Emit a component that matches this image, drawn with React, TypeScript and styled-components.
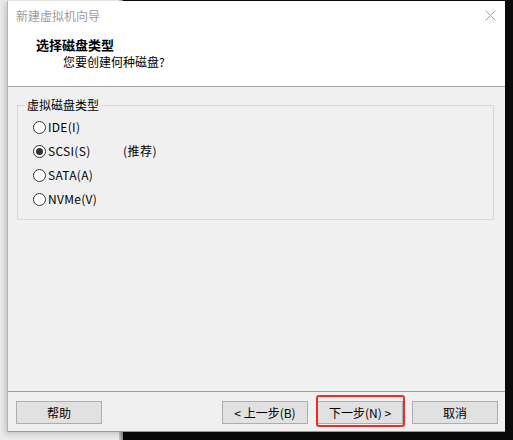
import { ReactNode } from "react";
import styled, { createGlobalStyle } from "styled-components";

const GlobalStyle = createGlobalStyle`
  html, body {
    margin: 0;
    padding: 0;
    background: #0a0a0a;
  }
  body {
    font-family: "Noto Sans CJK SC", "Noto Sans", sans-serif;
    font-size: 12px;
    color: #000;
  }
`;

const Desktop = styled.div`
  position: relative;
  width: 513px;
  height: 440px;
  overflow: hidden;
  display: grid;
  grid-template-columns: 119px 4px 1fr;
`;

const SidePanel = styled.div`
  background: #ebebeb;
`;

const PanelEdge = styled.div`
  background: linear-gradient(to right, #c8c8c8, #8a8a8a);
`;

const Backdrop = styled.div`
  background: #0a0a0a;
`;

const Window = styled.div`
  position: absolute;
  left: 7px;
  top: 1px;
  width: 498px;
  height: 431px;
  box-sizing: border-box;
  border-left: 1px solid #b4b4b4;
  border-bottom: 1px solid #9a9a9a;
  background: #f0f0f0;
  box-shadow: -2px 2px 6px rgba(0, 0, 0, 0.18);
  display: flex;
  flex-direction: column;
`;

const TitleBar = styled.div`
  height: 29px;
  display: flex;
  align-items: center;
  justify-content: space-between;
  padding: 0 9px 0 8px;
  background: #fff;
`;

const Caption = styled.span`
  color: #9b9b9b;
  line-height: 16px;
`;

const CloseButton = styled.button`
  width: 12px;
  height: 12px;
  padding: 0;
  border: 0;
  background: none;
  display: flex;
  align-items: center;
  justify-content: center;
`;

const Header = styled.div`
  height: 57px;
  box-sizing: border-box;
  padding-top: 7px;
  background: #fff;
  border-bottom: 1px solid #a0a0a0;
  display: flex;
  flex-direction: column;
  gap: 1px;
`;

const Title = styled.b`
  padding-left: 28px;
  font-size: 13px;
  line-height: 16px;
  font-weight: 700;
`;

const Subtitle = styled.span`
  padding-left: 55px;
  line-height: 16px;
`;

const Body = styled.div`
  flex: 1;
  padding: 10px 11px 0 9px;
`;

const GroupBox = styled.fieldset`
  margin: 0;
  padding: 0 0 8px;
  height: 123px;
  box-sizing: border-box;
  border: 1px solid #d8d8d8;
`;

const Legend = styled.legend`
  margin-left: 7px;
  padding: 0 2px;
  line-height: 16px;
`;

const OptionList = styled.div`
  display: flex;
  flex-direction: column;
  padding: 2px 0 0 15px;
`;

const Option = styled.label`
  height: 24px;
  display: flex;
  align-items: center;
  gap: 2px;
  line-height: 16px;
`;

const RadioMark = styled.span<{ $checked?: boolean }>`
  width: 13px;
  height: 13px;
  box-sizing: border-box;
  border: 1px solid #333;
  border-radius: 50%;
  background: #fff;
  display: flex;
  align-items: center;
  justify-content: center;

  &::after {
    content: "";
    width: 7px;
    height: 7px;
    border-radius: 50%;
    background: #333;
    display: ${({ $checked }) => ($checked ? "block" : "none")};
  }
`;

const OptionName = styled.span<{ $width?: number }>`
  min-width: ${({ $width = 0 }) => $width}px;
  letter-spacing: 0.3px;
`;

const Note = styled.span`
  letter-spacing: 0.5px;
`;

const Footer = styled.div`
  height: 40px;
  box-sizing: border-box;
  border-top: 1px solid #a0a0a0;
  display: flex;
  align-items: flex-start;
  padding: 9px 7px 0 8px;
`;

const Spacer = styled.div`
  flex: 1;
`;

const ButtonGroup = styled.div`
  display: flex;
  gap: 9px;
`;

const Button = styled.button`
  width: 86px;
  height: 23px;
  padding: 0;
  border: 1px solid #adadad;
  background: #e1e1e1;
  font-family: inherit;
  font-size: 12px;
  color: #000;
  line-height: 16px;
`;

const Highlight = styled.div`
  position: relative;
`;

const Annotation = styled.span`
  position: absolute;
  left: -1px;
  right: -2px;
  top: -6px;
  bottom: -3px;
  border: 2px solid #e3302c;
  border-radius: 3px;
  pointer-events: none;
`;

const options = [
  { id: "ide", name: "IDE(I)" },
  { id: "scsi", name: "SCSI(S)", note: "(推荐)", checked: true },
  { id: "sata", name: "SATA(A)" },
  { id: "nvme", name: "NVMe(V)" },
];

function CloseIcon() {
  return (
    <svg width="11" height="11" viewBox="0 0 11 11">
      <path d="M0.5 0.5 L10.5 10.5 M10.5 0.5 L0.5 10.5" stroke="#a3a3a3" strokeWidth="1" fill="none" />
    </svg>
  );
}

function Annotated({ children }: { children: ReactNode }) {
  return (
    <Highlight>
      {children}
      <Annotation />
    </Highlight>
  );
}

function App() {
  return (
    <>
      <GlobalStyle />
      <Desktop>
        <SidePanel />
        <PanelEdge />
        <Backdrop />

        <Window>
          <TitleBar>
            <Caption>新建虚拟机向导</Caption>
            <CloseButton>
              <CloseIcon />
            </CloseButton>
          </TitleBar>

          <Header>
            <Title>选择磁盘类型</Title>
            <Subtitle>您要创建何种磁盘?</Subtitle>
          </Header>

          <Body>
            <GroupBox>
              <Legend>虚拟磁盘类型</Legend>
              <OptionList>
                {options.map(({ id, name, note, checked }) => (
                  <Option key={id}>
                    <RadioMark $checked={checked} />
                    <OptionName $width={note ? 73 : 0}>{name}</OptionName>
                    {note && <Note>{note}</Note>}
                  </Option>
                ))}
              </OptionList>
            </GroupBox>
          </Body>

          <Footer>
            <Button>帮助</Button>
            <Spacer />
            <ButtonGroup>
              <Button>&lt; 上一步(B)</Button>
              <Annotated>
                <Button>下一步(N) &gt;</Button>
              </Annotated>
              <Button>取消</Button>
            </ButtonGroup>
          </Footer>
        </Window>
      </Desktop>
    </>
  );
}

export default App;
